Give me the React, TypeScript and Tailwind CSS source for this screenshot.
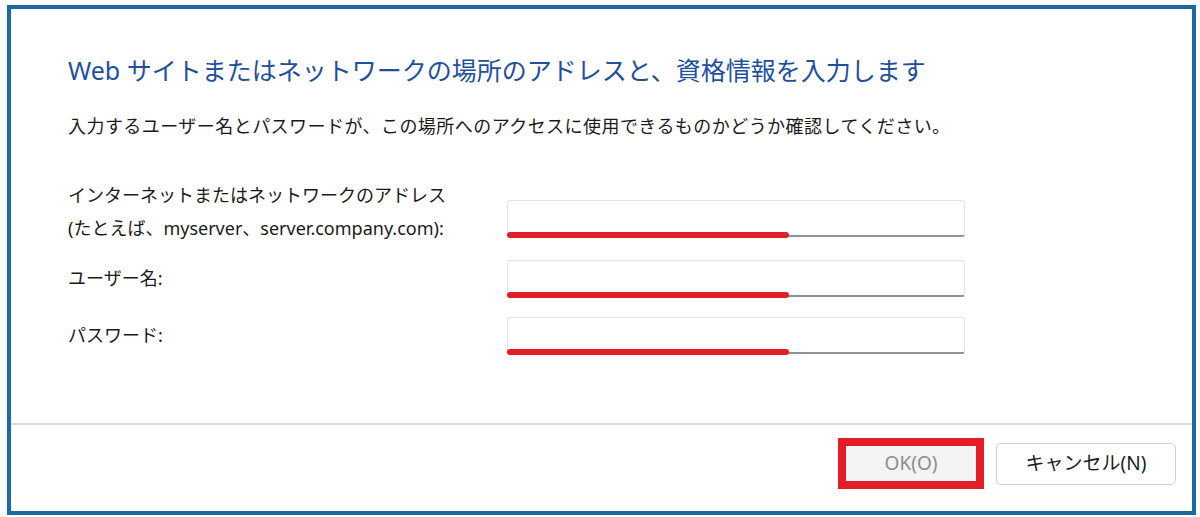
import React from 'react';

const font = { fontFamily: '"Noto Sans", "Noto Sans CJK JP", sans-serif' };

const Field: React.FC<{ className?: string }> = ({ className = '' }) => (
  <div className={`relative h-[37px] w-[458px] rounded-[3px] border border-[#e4e4e4] border-b-2 border-b-[#929292] bg-white ${className}`}>
    {/* red marker stroke */}
    <div className="absolute -left-[1px] -bottom-[3px] h-[6px] w-[282px] rounded-full bg-[#e41e26]" />
  </div>
);

export default function App() {
  return (
    <div className="h-[517px] w-[1200px] bg-white pl-[7px] pt-[5px]" style={font}>
      <div className="flex h-[510px] w-[1189px] flex-col border-4 border-[#1b6aa5] bg-white">
        <div className="flex-1 pl-[57px]">
          <h1 className="mt-[44px] text-[25px] leading-[34px] text-[#1f4f9d]">
            Web サイトまたはネットワークの場所のアドレスと、資格情報を入力します
          </h1>
          <p className="mt-[26px] text-[18px] leading-[26px] tracking-[0.45px] text-[#1a1a1a]">
            入力するユーザー名とパスワードが、この場所へのアクセスに使用できるものかどうか確認してください。
          </p>

          <div className="mt-[40px] flex flex-col text-[18px] leading-[33px] text-[#1a1a1a]">
            <div className="flex">
              <div className="w-[439px]">
                <div>インターネットまたはネットワークのアドレス</div>
                <div>(たとえば、myserver、server.company.com):</div>
              </div>
              <Field className="mt-[21px]" />
            </div>
            <div className="mt-[15px] flex items-center">
              <div className="w-[439px]">ユーザー名:</div>
              <Field />
            </div>
            <div className="mt-[20px] flex items-center">
              <div className="w-[439px]">パスワード:</div>
              <Field />
            </div>
          </div>
        </div>

        <div className="h-[2px] bg-[#dedede]" />

        <div className="flex h-[86px] items-center justify-end gap-[12px] pb-[9px] pr-[16px]">
          <div className="border-[8px] border-[#e41e26]">
            <button className="h-[35px] w-[130px] bg-[#f3f3f3] text-[19px] text-[#8d8d8d]">
              OK(O)
            </button>
          </div>
          <button className="h-[42px] w-[180px] rounded-[5px] border border-[#cfcfcf] bg-white text-[19px] text-[#1a1a1a]">
            キャンセル(N)
          </button>
        </div>
      </div>
    </div>
  );
}
